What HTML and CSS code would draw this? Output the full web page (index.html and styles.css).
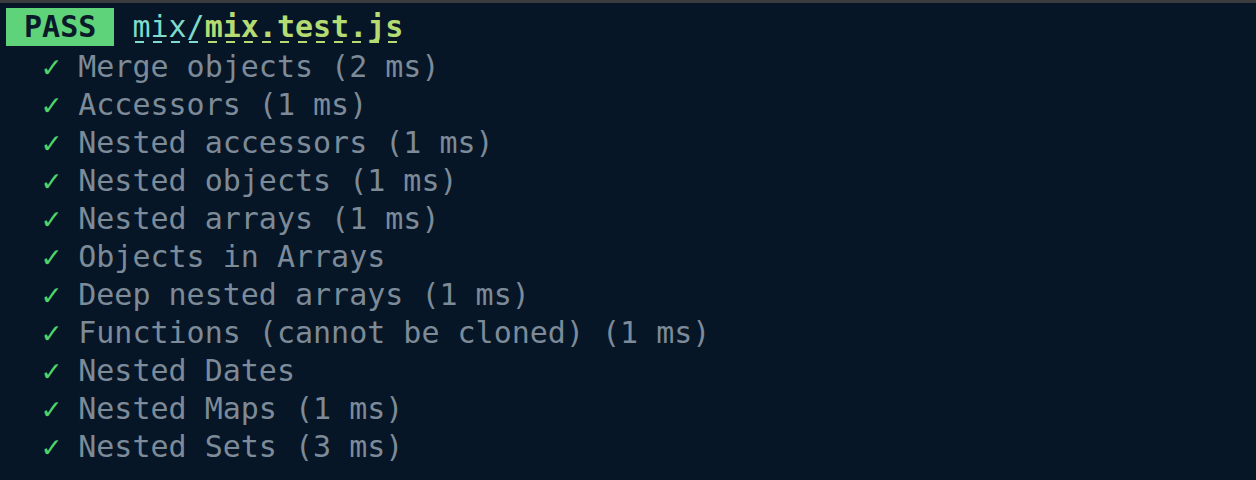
FILE: index.html
```html
<!DOCTYPE html>
<html>
<head>
<meta charset="utf-8">
<link rel="stylesheet" href="styles.css">
</head>
<body>
<div class="topbar"></div>
<div class="term">
  <div class="line"><span class="badge"> PASS </span> <span class="path"><span class="dir">mix/</span><span class="file">mix.test.js</span></span></div>
  <div class="list">
    <div class="line">  <span class="ok">✓</span> Merge objects (2 ms)</div>
    <div class="line">  <span class="ok">✓</span> Accessors (1 ms)</div>
    <div class="line">  <span class="ok">✓</span> Nested accessors (1 ms)</div>
    <div class="line">  <span class="ok">✓</span> Nested objects (1 ms)</div>
    <div class="line">  <span class="ok">✓</span> Nested arrays (1 ms)</div>
    <div class="line">  <span class="ok">✓</span> Objects in Arrays</div>
    <div class="line">  <span class="ok">✓</span> Deep nested arrays (1 ms)</div>
    <div class="line">  <span class="ok">✓</span> Functions (cannot be cloned) (1 ms)</div>
    <div class="line">  <span class="ok">✓</span> Nested Dates</div>
    <div class="line">  <span class="ok">✓</span> Nested Maps (1 ms)</div>
    <div class="line">  <span class="ok">✓</span> Nested Sets (3 ms)</div>
  </div>
</div>
</body>
</html>
```
FILE: styles.css
```css
html, body {
  margin: 0;
  padding: 0;
  background: #061626;
  height: 100%;
  overflow: hidden;
}
.topbar {
  height: 3px;
  background: #3b3c3e;
}
.term {
  padding: 5px 0 0 6px;
  font-family: "DejaVu Sans Mono", monospace;
  font-size: 30px;
  line-height: 38px;
  color: #7d8a98;
}
.list {
  padding-top: 2px;
}
.line {
  height: 38px;
  white-space: pre;
}
.badge {
  display: inline-block;
  background: #5fd37a;
  color: #0a1a29;
  font-weight: bold;
  height: 38px;
  vertical-align: top;
}
.path {
  display: inline-block;
  height: 38px;
  vertical-align: top;
}
.dir, .file {
  display: inline-block;
  height: 38px;
  position: relative;
}
.dir {
  color: #7fdbca;
}
.file {
  color: #b4dc73;
  font-weight: bold;
}
.dir::after, .file::after {
  content: "";
  position: absolute;
  left: 3px;
  right: 0;
  top: 33px;
  height: 2px;
  background: repeating-linear-gradient(to right, currentColor 0 9px, transparent 9px 18px);
}
.ok {
  color: #4fd36a;
}
```
